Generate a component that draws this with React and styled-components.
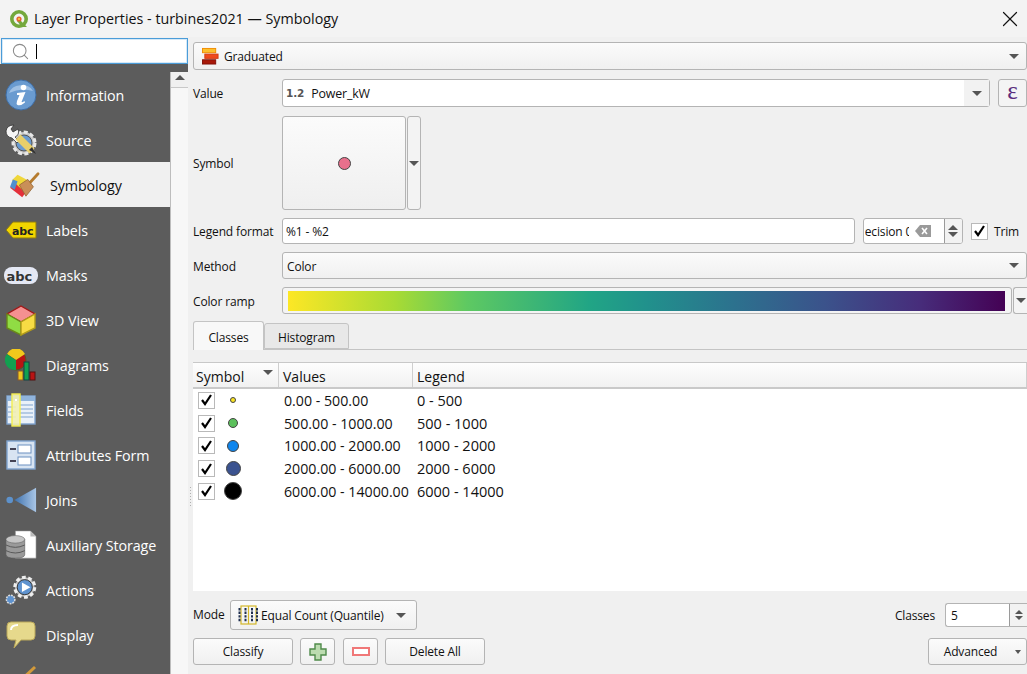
import React from 'react'
import styled, { createGlobalStyle } from 'styled-components'
import { Search, X } from 'lucide-react'

const GlobalStyle = createGlobalStyle`
    html, body {
        margin: 0;
        padding: 0;
        background: #f0f0f0;
        overflow: hidden;
    }
    * {
        box-sizing: border-box;
    }
`

const Dialog = styled.div`
    width: 1027px;
    height: 674px;
    overflow: hidden;
    background: #f0f0f0;
    color: #111;
    font-family: "Open Sans", "Noto Sans", sans-serif;
    font-size: 12px;
    letter-spacing: -0.15px;
`

const TitleBar = styled.div`
    height: 37px;
    display: flex;
    align-items: center;
    padding: 0 4px 0 9px;
    font-size: 14.3px;
    letter-spacing: 0;
    background: #f3f3f3;
    span {
        margin-left: 5px;
        flex: 1;
    }
`

const Body = styled.div`
    height: 637px;
    display: flex;
`

const LeftPane = styled.div`
    width: 188px;
    flex: none;
    display: flex;
    flex-direction: column;
`

const SearchBox = styled.div`
    height: 26px;
    margin: 1px 0 0 1px;
    border: 1px solid #4b9cd8;
    box-shadow: inset 0 0 0 1px #d5e9f8;
    background: #fff;
    display: flex;
    align-items: center;
    padding-left: 9px;
    color: #8a8a8a;
`

const Caret = styled.i`
    width: 1px;
    height: 15px;
    background: #000;
    margin-left: 6px;
`

const SideWrap = styled.div`
    flex: 1;
    display: flex;
    min-height: 0;
    background: #5c5c5c;
`

const SideList = styled.div`
    width: 170px;
    flex: none;
    overflow: hidden;
    padding-top: 8px;
`

const SideItem = styled.div`
    height: 45px;
    display: flex;
    align-items: center;
    padding-left: ${p => (p.$active ? '9px' : '5px')};
    font-size: 14.3px;
    letter-spacing: -0.1px;
    color: ${p => (p.$active ? '#111' : '#fff')};
    background: ${p => (p.$active ? '#f0f0f0' : 'transparent')};
`

const SideLabel = styled.div`
    padding-top: 2px;
`

const IconSlot = styled.div`
    width: 32px;
    height: 32px;
    flex: none;
    margin-right: 9px;
    display: flex;
    align-items: center;
    justify-content: center;
    svg {
        flex: none;
    }
`

const ScrollTrack = styled.div`
    width: 18px;
    flex: none;
    background: #f7f7f7;
    border-left: 1px solid #bdbdbd;
    margin-top: 8px;
`

const ScrollUp = styled.div`
    height: 16px;
    border-bottom: 1px solid #c8c8c8;
    display: flex;
    justify-content: center;
    padding-top: 3px;
    background: #f0f0f0;
`

const Splitter = styled.div`
    width: 5px;
    flex: none;
    display: flex;
    flex-direction: column;
    align-items: center;
    gap: 2px;
    padding-top: 450px;
    i {
        width: 1px;
        height: 1px;
        background: #b0b0b0;
    }
`

const MainPane = styled.div`
    flex: 1;
    min-width: 0;
    display: flex;
    flex-direction: column;
    padding-top: 5px;
`

const Field = styled.div`
    display: flex;
    align-items: center;
    height: ${p => p.$h || 28}px;
    border: 1px solid #b4b4b4;
    border-radius: 3px;
    background: ${p => (p.$flat ? '#fff' : 'linear-gradient(#fbfbfb, #f0f0f0)')};
    padding-left: ${p => p.$pad ?? 4}px;
    gap: ${p => p.$gap || 0}px;
    flex: ${p => (p.$grow ? 1 : 'none')};
    min-width: 0;
`

const Arrow = styled.i`
    width: 0;
    height: 0;
    flex: none;
    border-left: ${p => p.$s || 5}px solid transparent;
    border-right: ${p => p.$s || 5}px solid transparent;
    border-${p => (p.$up ? 'bottom' : 'top')}: ${p => p.$s || 5}px solid #555;
`

const EndArrow = styled.div`
    margin-left: auto;
    width: ${p => p.$w || 24}px;
    height: 100%;
    flex: none;
    display: flex;
    align-items: center;
    justify-content: center;
    background: ${p => p.$bg || 'transparent'};
`

const FormGrid = styled.div`
    display: grid;
    grid-template-columns: 89px 1fr;
    align-items: center;
    margin-top: ${p => p.$mt || 8}px;
`

const Label = styled.div`
    white-space: nowrap;
    padding-top: ${p => p.$nudge || 0}px;
`

const NudgedText = styled.span`
    padding-top: 2px;
`

const Inline = styled.div`
    display: flex;
    align-items: center;
    min-width: 0;
`

const FieldPrefix = styled.b`
    color: #555;
    font-size: 10.5px;
    margin-right: 7px;
    font-family: "DejaVu Sans", sans-serif;
`

const FieldName = styled.span`
    font-size: 12.4px;
`

const ExprButton = styled.div`
    width: 29px;
    height: 28px;
    border: 1px solid #b4b4b4;
    border-radius: 3px;
    margin-left: 8px;
    background: #f4f4f4;
    color: #5b2d7e;
    font-family: "Liberation Serif", serif;
    font-size: 25px;
    line-height: 22px;
    text-align: center;
`

const SymbolButton = styled.div`
    width: 124px;
    height: 94px;
    border: 1px solid #b4b4b4;
    border-radius: 3px;
    background: linear-gradient(#fbfbfb, #efefef);
    display: flex;
    align-items: center;
    justify-content: center;
`

const SymbolDot = styled.i`
    width: 13px;
    height: 13px;
    border-radius: 50%;
    background: #e8708c;
    border: 1px solid #444;
`

const SymbolMenu = styled.div`
    width: 14px;
    height: 94px;
    margin-left: 1px;
    border: 1px solid #b4b4b4;
    border-radius: 3px;
    background: #f3f3f3;
    display: flex;
    align-items: center;
    justify-content: center;
`

const Precision = styled.div`
    width: 100px;
    height: 26px;
    margin-left: 8px;
    flex: none;
    border: 1px solid #b4b4b4;
    border-radius: 3px;
    background: #fff;
    display: flex;
    align-items: center;
    overflow: hidden;
    padding-left: 1px;
`

const PrecisionText = styled.div`
    width: 44px;
    flex: none;
    overflow: hidden;
    white-space: nowrap;
    text-indent: -12px;
    margin-right: 6px;
`

const Spin = styled.div`
    margin-left: auto;
    width: 18px;
    height: 100%;
    flex: none;
    border-left: 1px solid #9a9a9a;
    background: #f2f2f2;
    display: flex;
    flex-direction: column;
    align-items: center;
    justify-content: center;
    gap: 2px;
`

const Check = styled.div`
    width: 17px;
    height: 17px;
    flex: none;
    border: 1px solid #b9b9b9;
    background: #fff;
    display: flex;
    align-items: center;
    justify-content: center;
`

const TrimBox = styled(Inline)`
    margin: 0 8px 0 8px;
    gap: 6px;
`

const RampBar = styled.div`
    flex: 1;
    height: 27px;
    border: 1px solid #b4b4b4;
    border-radius: 3px;
    background: #f4f4f4;
    padding: 3px 6px 2px 5px;
    div {
        height: 100%;
        background: linear-gradient(90deg, #fde725 0%, #a8db34 15%, #5ec962 25%, #21a585 42%, #21918c 50%, #2c728e 62%, #3b528b 75%, #472d7b 88%, #440154 100%);
    }
`

const RampMenu = styled.div`
    width: 14px;
    height: 27px;
    margin-left: 1px;
    flex: none;
    border: 1px solid #b4b4b4;
    border-radius: 3px 0 0 3px;
    border-right: none;
    background: #f4f4f4;
    display: flex;
    align-items: center;
    justify-content: center;
`

const TabBar = styled.div`
    display: flex;
    align-items: flex-end;
    height: 28px;
    margin-top: 8px;
    border-bottom: 1px solid #c4c4c4;
`

const Tab = styled.div`
    height: ${p => (p.$active ? 29 : 26)}px;
    width: ${p => (p.$active ? 71 : 85)}px;
    margin-bottom: ${p => (p.$active ? -1 : 0)}px;
    padding-top: 2px;
    display: flex;
    align-items: center;
    justify-content: center;
    border: 1px solid #c4c4c4;
    border-bottom: ${p => (p.$active ? 'none' : '1px solid #c4c4c4')};
    border-radius: 3px 3px 0 0;
    background: ${p => (p.$active ? '#f8f8f8' : '#e8e8e8')};
`

const ClassTable = styled.div`
    margin-top: 12px;
    height: 229px;
    background: #fff;
    border-top: 1px solid #c8c8c8;
    display: flex;
    flex-direction: column;
`

const HeadRow = styled.div`
    height: 26px;
    flex: none;
    display: grid;
    grid-template-columns: 86px 134px 1fr;
    border-bottom: 2px solid #c9c9c9;
    background: linear-gradient(#fdfdfd, #f1f1f1);
    font-size: 14px;
    letter-spacing: 0;
`

const HeadCell = styled.div`
    display: flex;
    align-items: center;
    justify-content: space-between;
    padding: 2px 5px 0 ${p => p.$pad ?? 4}px;
    border-right: 1px solid #cfcfcf;
    i {
        margin-top: -7px;
    }
`

const ClassRow = styled.div`
    height: 22.75px;
    flex: none;
    display: grid;
    grid-template-columns: 86px 134px 1fr;
    align-items: center;
    font-size: 14.2px;
    letter-spacing: 0;
`

const SymbolCell = styled.div`
    display: flex;
    align-items: center;
    padding-left: 5px;
`

const DotSlot = styled.div`
    width: 24px;
    margin-left: 6px;
    display: flex;
    justify-content: center;
`

const ClassDot = styled.i`
    border-radius: 50%;
    border: 1px solid #444;
    width: ${p => p.$size}px;
    height: ${p => p.$size}px;
    background: ${p => p.$color};
`

const ValueCell = styled.div`
    padding-left: ${p => p.$pad}px;
    white-space: nowrap;
`

const LegendCell = styled(ValueCell)`
    font-size: 14.5px;
`

const ModeRow = styled.div`
    display: flex;
    align-items: center;
    height: 30px;
    margin-top: 9px;
`

const ModeLabel = styled.div`
    width: 37px;
    flex: none;
    padding-bottom: 2px;
`

const ClassesBox = styled.div`
    margin-left: auto;
    display: flex;
    align-items: center;
`

const ClassesSpin = styled.div`
    width: 82px;
    height: 24px;
    margin-left: 10px;
    border: 1px solid #b4b4b4;
    border-radius: 3px 0 0 3px;
    border-right: none;
    background: #fff;
    display: flex;
    align-items: center;
    padding-left: 5px;
`

const ButtonRow = styled.div`
    display: flex;
    align-items: center;
    margin-top: 8px;
    gap: 7px;
`

const Button = styled.div`
    width: ${p => p.$w}px;
    height: 27px;
    border: 1px solid #b4b4b4;
    border-radius: 3px;
    background: linear-gradient(#fbfbfb, #f0f0f0);
    display: flex;
    align-items: center;
    justify-content: center;
    margin-left: ${p => p.$ml || 0};
    padding-right: ${p => p.$pr || 0}px;
    position: relative;
`

const AdvancedArrow = styled.i`
    position: absolute;
    right: 5px;
    top: 11px;
    width: 0;
    height: 0;
    border-left: 3px solid transparent;
    border-right: 3px solid transparent;
    border-top: 4px solid #555;
`

const QgisLogo = () => (
    <svg width="20" height="20" viewBox="0 0 20 20">
        <circle cx="10" cy="10" r="7.2" fill="none" stroke="#74a83c" strokeWidth="3.6" />
        <path d="M10 10 L18 18 L13 18 L8 12 Z" fill="#74a83c" />
        <circle cx="10" cy="10" r="2.6" fill="#e8632c" />
        <circle cx="10" cy="10" r="1.1" fill="#f4d24a" />
    </svg>
)

const InfoIcon = () => (
    <svg width="32" height="32" viewBox="0 0 32 32">
        <circle cx="16" cy="16" r="15" fill="#6a9bd0" stroke="#3f6ea6" />
        <path d="M4 14 A13 11 0 0 1 28 12 Q16 8 4 14 Z" fill="#9fc0e4" />
        <circle cx="18.5" cy="8.5" r="2.8" fill="#fff" />
        <path d="M12 14 L20.5 13 L16.5 23 Q18 23.5 19.5 22 L20 23.5 Q16 27 12.5 26 Q11 25 12 22 L14.5 16 L12 16 Z" fill="#fff" />
    </svg>
)

const SourceIcon = () => (
    <svg width="32" height="32" viewBox="0 0 32 32">
        <circle cx="19" cy="19" r="11" fill="#c8c8c8" stroke="#e8e8e8" strokeWidth="3" strokeDasharray="4 2.4" />
        <circle cx="19" cy="19" r="8" fill="#6a9bd0" stroke="#555" />
        <path d="M1 7 Q2 1 9 1 L6 5 L8 8 L13 5 Q15 11 10 13 L14 17 L12 19 L7 14 Q1 13 1 7 Z" fill="#f6f6f6" stroke="#333" strokeWidth=".8" />
        <path d="M13 13 L27 27" stroke="#e8cf6a" strokeWidth="7" />
        <path d="M24 26 L27 23 L31 30 Z" fill="#333" />
    </svg>
)

const BrushIcon = () => (
    <svg width="32" height="28" viewBox="0 0 34 30">
        <path d="M1 18 L8 11 L20 20 L14 28 Z" fill="#e4303a" />
        <path d="M3 10 L9 4 L20 10 L14 20 Z" fill="#f0d73a" />
        <path d="M1 17 L4 9 L9 11 L6 20 Z" fill="#4f8fd0" />
        <path d="M21 14 L31 3" stroke="#b57b2e" strokeWidth="3" strokeLinecap="round" />
        <path d="M11 15 L20 9 L26 17 L18 27 Z" fill="#c98f58" stroke="#8f6232" strokeWidth=".8" />
    </svg>
)

const LabelIcon = () => (
    <svg width="32" height="20" viewBox="0 0 32 20">
        <path d="M1 10 L8 2 H31 V18 H8 Z" fill="#f2d500" stroke="#8d7a12" strokeWidth="1" />
        <text x="7" y="14.5" fontFamily="'DejaVu Sans', sans-serif" fontWeight="700" fontSize="11" fill="#222">abc</text>
    </svg>
)

const MaskIcon = () => (
    <svg width="34" height="20" viewBox="0 0 34 20">
        <rect x="0" y="2" width="34" height="17" rx="8" fill="#e4e8f4" />
        <text x="2.5" y="15.5" fontFamily="'DejaVu Sans', sans-serif" fontWeight="700" fontSize="13" fill="#333">abc</text>
    </svg>
)

const CubeIcon = () => (
    <svg width="30" height="32" viewBox="0 0 30 32">
        <path d="M15 2 L29 10 L15 18 L1 10 Z" fill="#f59090" stroke="#a01818" strokeWidth="1.4" />
        <path d="M1 10 L15 18 V31 L1 24 Z" fill="#90dc44" stroke="#6a8a1a" strokeWidth="1.4" />
        <path d="M29 10 L15 18 V31 L29 24 Z" fill="#f8dc44" stroke="#b09a1a" strokeWidth="1.4" />
    </svg>
)

const DiagramIcon = () => (
    <svg width="32" height="32" viewBox="0 0 32 32">
        <circle cx="11" cy="11" r="10" fill="#b81414" stroke="#552" />
        <path d="M11 11 L2 5 A10 10 0 0 1 20 5 Z" fill="#f2c81c" />
        <path d="M11 11 L2 5 A10 10 0 0 0 11 21 Z" fill="#12a050" />
        <rect x="13" y="22" width="5" height="9" fill="#f2c81c" stroke="#8a5a2a" />
        <rect x="19" y="13" width="5" height="18" fill="#12a050" stroke="#144" />
        <rect x="25" y="23" width="5" height="8" fill="#b81414" stroke="#511" />
    </svg>
)

const FieldsIcon = () => (
    <svg width="30" height="34" viewBox="0 0 30 34">
        <rect x="1" y="3" width="28" height="28" fill="#eaf1f9" stroke="#7fa3cf" strokeWidth="1.4" />
        <rect x="1" y="3" width="28" height="5" fill="#90b4dc" />
        <path d="M14 12 H27 M14 16 H27 M14 20 H27 M14 24 H27 M2 14 H10 M2 19 H10 M2 24 H10" stroke="#7fa3cf" />
        <rect x="6" y="1" width="8" height="32" fill="#f2efb4" fillOpacity=".9" stroke="#f4ee50" strokeWidth="1.4" />
        <rect x="9" y="6" width="2" height="2" fill="#fff" />
    </svg>
)

const FormIcon = () => (
    <svg width="30" height="30" viewBox="0 0 30 30">
        <rect x="1" y="1" width="28" height="28" fill="#d8e4f2" stroke="#7fa3cf" strokeWidth="1.4" />
        <rect x="12" y="5" width="13" height="8" fill="#fff" stroke="#6a8fc0" />
        <rect x="12" y="17" width="13" height="8" fill="#fff" stroke="#6a8fc0" />
        <path d="M4 9 H10 M4 21 H10" stroke="#445" strokeWidth="2" />
    </svg>
)

const JoinIcon = () => (
    <svg width="32" height="30" viewBox="0 0 34 30">
        <defs>
            <linearGradient id="joinFill" x1="0" x2="1">
                <stop offset="0" stopColor="#3f72ae" />
                <stop offset="1" stopColor="#a9c6e6" />
            </linearGradient>
        </defs>
        <circle cx="5" cy="15" r="3.5" fill="#5d92cc" />
        <path d="M10 15 L33 2 V28 Z" fill="url(#joinFill)" />
    </svg>
)

const StorageIcon = () => (
    <svg width="32" height="32" viewBox="0 0 34 32">
        <path d="M11 1 H27 L33 7 V30 H11 Z" fill="#fff" stroke="#888" strokeWidth=".6" />
        <path d="M27 1 V7 H33 Z" fill="#bbb" />
        <path d="M1 10 V26 Q1 30 11 30 Q21 30 21 26 V10 Z" fill="#9a9a9a" stroke="#555" strokeWidth=".6" />
        <ellipse cx="11" cy="10" rx="10" ry="4" fill="#c6c6c6" stroke="#666" strokeWidth=".6" />
        <path d="M1 16 Q11 21 21 16 M1 22 Q11 27 21 22" fill="none" stroke="#555" />
    </svg>
)

const ActionIcon = () => (
    <svg width="32" height="32" viewBox="0 0 34 32">
        <circle cx="21" cy="13" r="10.5" fill="#bcbcbc" stroke="#eee" strokeWidth="3.4" strokeDasharray="4 2.6" />
        <circle cx="21" cy="13" r="8" fill="#5f93cf" stroke="#333" />
        <path d="M18 8 L27 13 L18 18 Z" fill="#fff" />
        <circle cx="6" cy="26" r="4.5" fill="#5f93cf" stroke="#ddd" strokeWidth="1.6" strokeDasharray="2 1" />
    </svg>
)

const DisplayIcon = () => (
    <svg width="30" height="28" viewBox="0 0 30 28">
        <path d="M5 1 H25 Q29 1 29 5 V15 Q29 19 25 19 H15 L8 27 L10 19 H5 Q1 19 1 15 V5 Q1 1 5 1 Z" fill="#e6d98c" stroke="#b9a75a" />
        <path d="M5 9 Q5 4 12 4" fill="none" stroke="#fff" strokeWidth="2" />
    </svg>
)

const RenderingIcon = () => (
    <svg width="32" height="32" viewBox="0 0 32 32">
        <path d="M30 3 L14 18" stroke="#d39a3a" strokeWidth="3" />
    </svg>
)

const GraduatedIcon = () => (
    <svg width="17" height="18" viewBox="0 0 18 18">
        <rect x="0.5" y="1" width="14" height="4.5" fill="#fbc02d" stroke="#f08c00" />
        <rect x="3" y="7" width="14" height="4.5" fill="#f04a1c" stroke="#d13a10" />
        <rect x="0.5" y="13" width="14" height="4.5" fill="#a81808" stroke="#801008" />
    </svg>
)

const ModeIcon = () => (
    <svg width="20" height="20" viewBox="0 0 20 20">
        <rect x="3" y="1" width="15" height="18" fill="none" stroke="#d4b82a" strokeWidth="1.2" />
        <path d="M10.5 1 V19" stroke="#d4b82a" strokeWidth="1.2" />
        <path d="M1.5 3 V17 M7.5 3 V17 M14 3 V17 M19 3 V17" stroke="#1f2f4f" strokeWidth="2" strokeDasharray="2.4 1.2" />
    </svg>
)

const PlusIcon = () => (
    <svg width="18" height="18" viewBox="0 0 18 18">
        <path d="M6 1 H12 V6 H17 V12 H12 V17 H6 V12 H1 V6 H6 Z" fill="#bcdcb0" stroke="#4f8a4a" strokeWidth="1.4" />
    </svg>
)

const MinusIcon = () => (
    <svg width="18" height="10" viewBox="0 0 18 10">
        <rect x="1" y="1" width="16" height="7" fill="#fff" stroke="#f07878" strokeWidth="2" />
    </svg>
)

const ClearIcon = () => (
    <svg width="16" height="12" viewBox="0 0 16 12">
        <path d="M5 0 H16 V12 H5 L0 6 Z" fill="#9a9a9a" />
        <path d="M7 3 L12 9 M12 3 L7 9" stroke="#fff" strokeWidth="1.6" />
    </svg>
)

const Tick = () => (
    <svg width="13" height="12" viewBox="0 0 13 12">
        <path d="M2 6 L5 10 L11 1" fill="none" stroke="#000" strokeWidth="2.2" />
    </svg>
)

const sections = [
    { name: 'Information', icon: <InfoIcon /> },
    { name: 'Source', icon: <SourceIcon /> },
    { name: 'Symbology', icon: <BrushIcon />, active: true },
    { name: 'Labels', icon: <LabelIcon /> },
    { name: 'Masks', icon: <MaskIcon /> },
    { name: '3D View', icon: <CubeIcon /> },
    { name: 'Diagrams', icon: <DiagramIcon /> },
    { name: 'Fields', icon: <FieldsIcon /> },
    { name: 'Attributes Form', icon: <FormIcon /> },
    { name: 'Joins', icon: <JoinIcon /> },
    { name: 'Auxiliary Storage', icon: <StorageIcon /> },
    { name: 'Actions', icon: <ActionIcon /> },
    { name: 'Display', icon: <DisplayIcon /> },
    { name: '', icon: <RenderingIcon /> },
]

const classes = [
    { values: '0.00 - 500.00', legend: '0 - 500', size: 6, color: '#fbe423' },
    { values: '500.00 - 1000.00', legend: '500 - 1000', size: 10, color: '#5cc05c' },
    { values: '1000.00 - 2000.00', legend: '1000 - 2000', size: 12, color: '#0f86ee' },
    { values: '2000.00 - 6000.00', legend: '2000 - 6000', size: 15, color: '#3b5390' },
    { values: '6000.00 - 14000.00', legend: '6000 - 14000', size: 18, color: '#000' },
]

const splitterDots = [0, 1, 2, 3, 4, 5, 6]

const App = () => {
    return (
        <Dialog>
            <GlobalStyle />
            <TitleBar>
                <QgisLogo />
                <span>Layer Properties - turbines2021 — Symbology</span>
                <X size={26} strokeWidth={1.1} color="#111" />
            </TitleBar>
            <Body>
                <LeftPane>
                    <SearchBox>
                        <Search size={19} strokeWidth={1.3} />
                        <Caret />
                    </SearchBox>
                    <SideWrap>
                        <SideList>
                            {sections.map(s => (
                                <SideItem key={s.name} $active={s.active}>
                                    <IconSlot>{s.icon}</IconSlot>
                                    <SideLabel>{s.name}</SideLabel>
                                </SideItem>
                            ))}
                        </SideList>
                        <ScrollTrack>
                            <ScrollUp><Arrow $up $s={5} /></ScrollUp>
                        </ScrollTrack>
                    </SideWrap>
                </LeftPane>
                <Splitter>
                    {splitterDots.map(d => <i key={d} />)}
                </Splitter>
                <MainPane>
                    <Field $pad={8} $gap={5}>
                        <GraduatedIcon />
                        Graduated
                        <EndArrow><Arrow /></EndArrow>
                    </Field>
                    <FormGrid $mt={9}>
                        <Label>Value</Label>
                        <Inline>
                            <Field $flat $grow $pad={3}>
                                <FieldPrefix>1.2</FieldPrefix>
                                <FieldName>Power_kW</FieldName>
                                <EndArrow $w={25} $bg="#f2f2f2"><Arrow /></EndArrow>
                            </Field>
                            <ExprButton>ε</ExprButton>
                        </Inline>
                    </FormGrid>
                    <FormGrid $mt={9}>
                        <Label>Symbol</Label>
                        <Inline>
                            <SymbolButton><SymbolDot /></SymbolButton>
                            <SymbolMenu><Arrow /></SymbolMenu>
                        </Inline>
                    </FormGrid>
                    <FormGrid>
                        <Label>Legend format</Label>
                        <Inline>
                            <Field $flat $grow $h={26} $pad={3}>%1 - %2</Field>
                            <Precision>
                                <PrecisionText>Precision 0</PrecisionText>
                                <ClearIcon />
                                <Spin><Arrow $up $s={5} /><Arrow $s={5} /></Spin>
                            </Precision>
                            <TrimBox>
                                <Check><Tick /></Check>
                                Trim
                            </TrimBox>
                        </Inline>
                    </FormGrid>
                    <FormGrid>
                        <Label $nudge={2}>Method</Label>
                        <Field $h={27}>
                            <NudgedText>Color</NudgedText>
                            <EndArrow><Arrow /></EndArrow>
                        </Field>
                    </FormGrid>
                    <FormGrid>
                        <Label $nudge={2}>Color ramp</Label>
                        <Inline>
                            <RampBar><div /></RampBar>
                            <RampMenu><Arrow /></RampMenu>
                        </Inline>
                    </FormGrid>
                    <TabBar>
                        <Tab $active>Classes</Tab>
                        <Tab>Histogram</Tab>
                    </TabBar>
                    <ClassTable>
                        <HeadRow>
                            <HeadCell $pad={3}>Symbol<Arrow /></HeadCell>
                            <HeadCell>Values</HeadCell>
                            <HeadCell>Legend</HeadCell>
                        </HeadRow>
                        {classes.map(c => (
                            <ClassRow key={c.values}>
                                <SymbolCell>
                                    <Check><Tick /></Check>
                                    <DotSlot><ClassDot $size={c.size} $color={c.color} /></DotSlot>
                                </SymbolCell>
                                <ValueCell $pad={5}>{c.values}</ValueCell>
                                <LegendCell $pad={4}>{c.legend}</LegendCell>
                            </ClassRow>
                        ))}
                    </ClassTable>
                    <ModeRow>
                        <ModeLabel>Mode</ModeLabel>
                        <Field $h={30} $pad={7} $gap={3}>
                            <ModeIcon />
                            Equal Count (Quantile)
                            <EndArrow $w={29}><Arrow /></EndArrow>
                        </Field>
                        <ClassesBox>
                            Classes
                            <ClassesSpin>
                                5
                                <Spin><Arrow $up $s={4} /><Arrow $s={4} /></Spin>
                            </ClassesSpin>
                        </ClassesBox>
                    </ModeRow>
                    <ButtonRow>
                        <Button $w={100}>Classify</Button>
                        <Button $w={35}><PlusIcon /></Button>
                        <Button $w={35} $ml="1px"><MinusIcon /></Button>
                        <Button $w={100}>Delete All</Button>
                        <Button $w={99} $ml="auto" $pr={14}>
                            Advanced
                            <AdvancedArrow />
                        </Button>
                    </ButtonRow>
                </MainPane>
            </Body>
        </Dialog>
    )
}

export default App
